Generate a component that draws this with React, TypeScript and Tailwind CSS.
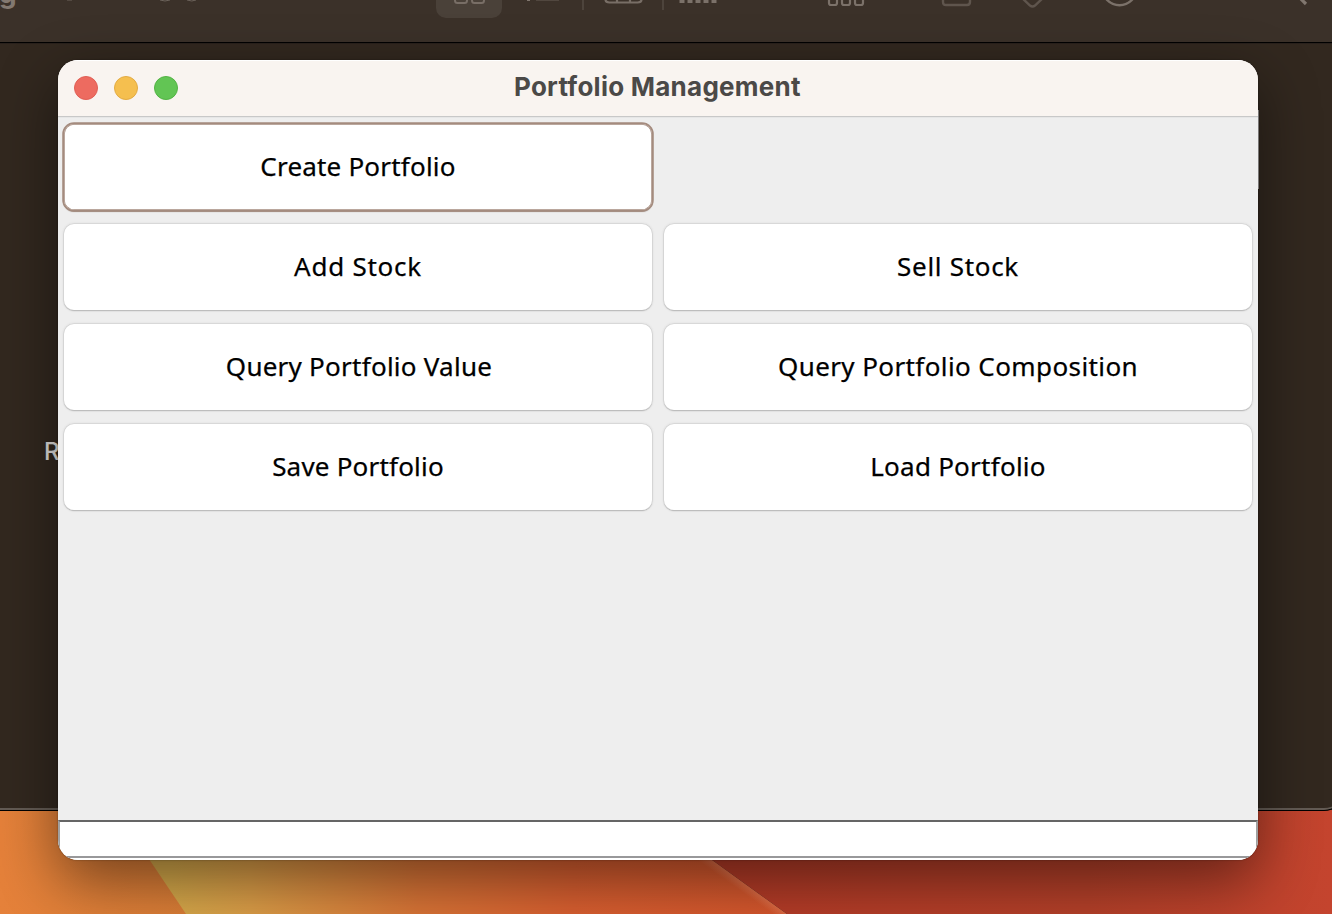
import React from "react";

type Action = { label: string; className: string };

const actions: (Action | null)[] = [
  { label: "Create Portfolio", className: "tracking-[0.2px]" },
  null,
  { label: "Add Stock", className: "tracking-[0.75px]" },
  { label: "Sell Stock", className: "tracking-[0.7px]" },
  { label: "Query Portfolio Value", className: "tracking-[0.25px] pl-[2px]" },
  { label: "Query Portfolio Composition", className: "tracking-[0.4px]" },
  { label: "Save Portfolio", className: "tracking-[0.2px]" },
  { label: "Load Portfolio", className: "tracking-[0.25px]" },
];

function Wallpaper() {
  return (
    <svg className="absolute inset-0" width="1332" height="914" viewBox="0 0 1332 914">
      <defs>
        <linearGradient id="amber" gradientUnits="userSpaceOnUse" x1="0" y1="0" x2="200" y2="0">
          <stop offset="0" stopColor="#e5813a" />
          <stop offset="1" stopColor="#d97d36" />
        </linearGradient>
        <linearGradient id="gold" gradientUnits="userSpaceOnUse" x1="170" y1="900" x2="790" y2="900">
          <stop offset="0" stopColor="#d6a94a" />
          <stop offset="0.13" stopColor="#db9d47" />
          <stop offset="0.4" stopColor="#d97436" />
          <stop offset="0.65" stopColor="#d95f30" />
          <stop offset="1" stopColor="#d4552c" />
        </linearGradient>
        <linearGradient id="red" gradientUnits="userSpaceOnUse" x1="720" y1="0" x2="1332" y2="0">
          <stop offset="0" stopColor="#b53b27" />
          <stop offset="0.6" stopColor="#b54029" />
          <stop offset="1" stopColor="#c4442e" />
        </linearGradient>
        <linearGradient id="edge" gradientUnits="userSpaceOnUse" x1="750" y1="887" x2="745" y2="894">
          <stop offset="0" stopColor="#f39a78" stopOpacity="0.35" />
          <stop offset="1" stopColor="#f39a78" stopOpacity="0" />
        </linearGradient>
      </defs>
      <rect y="790" width="220" height="124" fill="url(#amber)" />
      <path d="M116 810H643L787 914H186Z" fill="url(#gold)" />
      <path d="M643 810L787 914H770L630 810Z" fill="url(#edge)" />
      <path d="M643 810H1332V914H787Z" fill="url(#red)" />
    </svg>
  );
}

function FinderWindow() {
  return (
    <div className="absolute -left-20 top-0 h-[811px] w-[1424px] overflow-hidden rounded-br-[20px] border-b border-black bg-[#32281f] pl-20">
      <div className="relative h-[43px] overflow-hidden border-b border-black bg-[#3b3129]">
        <span className="absolute -left-px -top-[22px] font-[Inter] text-[28px] font-bold leading-[30px] text-[#827870]">g</span>
        <svg className="absolute left-0 top-0" width="1334" height="30" viewBox="0 0 1334 30" fill="none">
          <path d="M67 0h5M160 0q5 2 10 0M187 0q5 2 9 0" stroke="#6c635b" />
          <rect x="436" y="-30" width="66" height="48" rx="10" fill="#4a4139" />
          <g stroke="#786e66" strokeWidth="2">
            <rect x="455" y="-8" width="12" height="11" rx="2.500" />
            <rect x="472" y="-8" width="12" height="11" rx="2.500" />
          </g>
          <path d="M527 0h3" stroke="#80766e" strokeWidth="2" />
          <path d="M536 .5h23" stroke="#51473f" />
          <path d="M583 0v10M663 0v10" stroke="#4d443c" strokeWidth="2" />
          <path d="M605.500-5v4.500q0 3 4 3h28q4 0 4-3v-4.500M617-5v8M630-5v8" stroke="#786e66" strokeWidth="2.200" />
          <path d="M679.500 0h5v3h-5zM687.500 0h5v3h-5zM695.500 0h5v3h-5zM703.500 0h5v3h-5zM711.500 0h5v3h-5z" fill="#7b7169" />
          <g stroke="#7b7169" strokeWidth="2.200">
            <rect x="829" y="-5" width="8" height="10" rx="2" />
            <rect x="842" y="-5" width="8" height="10" rx="2" />
            <rect x="855" y="-5" width="8" height="10" rx="2" />
          </g>
          <path d="M943-5v7q0 3 3 3h21q3 0 3-3v-7M1021-3l9 8.500q2.500 2 5 0l9-8.500" stroke="#5f554d" strokeWidth="2.400" />
          <circle cx="1119.500" cy="-12" r="17.200" stroke="#7b7169" strokeWidth="2.400" />
          <path d="M1298-4l8 8" stroke="#81776f" strokeWidth="3.200" />
        </svg>
      </div>
      <div className="h-px bg-[#29211c]" />
      <span className="absolute left-[124px] top-[437px] font-[Inter] text-[24px] font-medium leading-[30px] text-[#e2e0de]">R</span>
      <div className="absolute inset-x-0 bottom-0 h-10 rounded-br-[20px] border-b-2 border-[#635b54]" />
    </div>
  );
}

function ActionButton({ action, focused }: { action: Action; focused: boolean }) {
  return (
    <button
      className={
        "flex h-[86px] items-center justify-center rounded-[10px] bg-white pb-[3px] font-['Noto_Sans'] text-[26px] leading-[36px] text-black outline-none [-webkit-text-stroke:0.25px_black] " +
        (focused
          ? "shadow-[inset_0_0_0_0.75px_#a48b7e,0_0_0_1.75px_#a48b7e,0_1px_1px_1px_#a3948b]"
          : "shadow-[0_0_0_0.5px_#d0d0d0,0_1px_1px_#a5a5a5,0_0_2px_1px_#dcdcdc]")
      }
    >
      <span className={"whitespace-nowrap " + action.className}>{action.label}</span>
    </button>
  );
}

export default function App() {
  return (
    <main className="relative h-[914px] w-[1332px] overflow-hidden bg-[#32281f]">
      <Wallpaper />
      <FinderWindow />
      <section className="absolute left-[58px] top-[60px] flex h-[800px] w-[1200px] flex-col overflow-hidden rounded-[20px] bg-[#eeeeee] shadow-[0_0_2px_rgba(0,0,0,0.4),0_20px_60px_rgba(0,0,0,0.48)]">
        <header className="relative flex h-[57px] shrink-0 items-center border-b border-[#c8c8c8] bg-[#f9f4f0] px-4 shadow-[inset_0_1px_0_#ffffff]">
          <div className="flex gap-4">
            <i className="size-6 rounded-full border border-[#e05f55] bg-[#ed6b60]" />
            <i className="size-6 rounded-full border border-[#e2ab44] bg-[#f5bf4f]" />
            <i className="size-6 rounded-full border border-[#53b345] bg-[#62c554]" />
          </div>
          <h1 className="absolute left-[456px] top-[10px] whitespace-nowrap font-[Inter] text-[26px] font-bold leading-[34px] tracking-[0.25px] text-[#4b4947]">
            Portfolio Management
          </h1>
        </header>
        <div className="h-px shrink-0 bg-[#e6e6e6]" />
        <div className="grid grow auto-rows-[86px] grid-cols-2 content-start gap-x-3 gap-y-[14px] px-[6px] pt-[6px]">
          {actions.map((action, index) =>
            action ? <ActionButton key={index} action={action} focused={index === 0} /> : <div key={index} />,
          )}
        </div>
        <div className="flex h-10 shrink-0 flex-col rounded-b-[20px] bg-white pb-[2px]">
          <div className="grow border-x-2 border-y-2 border-x-[#a0a0a0] border-b-[#98989a] border-t-[#656565]" />
        </div>
      </section>
      <div className="absolute left-[1258px] top-[110px] h-[79px] w-px bg-[#787675]" />
    </main>
  );
}
